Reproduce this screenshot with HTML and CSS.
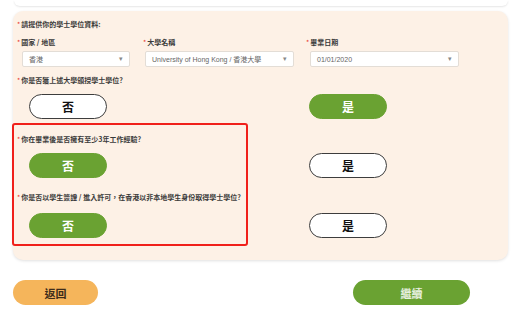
FILE: index.html
```html
<!DOCTYPE html>
<html lang="zh-Hant">
<head>
  <meta charset="UTF-8">
  <title>學士學位資料</title>
  <link rel="stylesheet" href="styles.css">
</head>
<body>

<div class="top-card"></div>

<section class="panel">
  <div class="intro"><span class="req">*</span>請提供你的學士學位資料:</div>

  <div class="fields">
    <div class="field f1">
      <div class="label"><span class="req">*</span>國家 / 地區</div>
      <div class="select">香港<span class="arrow">▾</span></div>
    </div>
    <div class="field f2">
      <div class="label"><span class="req">*</span>大學名稱</div>
      <div class="select">University of Hong Kong / 香港大學<span class="arrow">▾</span></div>
    </div>
    <div class="field f3">
      <div class="label"><span class="req">*</span>畢業日期</div>
      <div class="select">01/01/2020<span class="arrow">▾</span></div>
    </div>
  </div>

  <div class="question"><span class="req">*</span>你是否獲上述大學頒授學士學位?</div>
  <div class="choice-row">
    <button class="choice">否</button>
    <button class="choice on">是</button>
  </div>

  <!-- 需要核對的問題 -->
  <div class="alert-box">
    <div class="question"><span class="req">*</span>你在畢業後是否擁有至少3年工作經驗?</div>
    <div class="choice-row">
      <button class="choice on">否</button>
      <button class="choice">是</button>
    </div>
    <div class="question q3"><span class="req">*</span>你是否以學生簽證 / 進入許可，在香港以非本地學生身份取得學士學位?</div>
    <div class="choice-row r3">
      <button class="choice on">否</button>
      <button class="choice">是</button>
    </div>
  </div>
</section>

<div class="actions">
  <button class="btn back">返回</button>
  <button class="btn next">繼續</button>
</div>

</body>
</html>
```

FILE: styles.css
```css
html, body {
  margin: 0; padding: 0;
  background: #fff;
  color: #333;
  font-family: 'Noto Sans CJK TC', 'Noto Sans', sans-serif;
}

.top-card {
  height: 6px;
  margin: 0 15px 0 14px;
  background: #fff;
  border-radius: 0 0 6px 6px;
  box-shadow: 0 1px 2px rgba(0,0,0,0.10);
}

.panel {
  box-sizing: border-box;
  margin: 5px 0 0 13px;
  width: 495px;
  height: 249px;
  padding: 8px 0 0 4px;
  background: #fdf1e6;
  border-radius: 10px;
  box-shadow: 0 1px 3px rgba(0,0,0,0.12);
}

.req { color: #e8322c; font-weight: 400; margin-right: 1px; }

.intro, .label, .question {
  font-size: 7px;
  line-height: 10px;
  font-weight: 700;
  color: #3a3a3a;
  white-space: nowrap;
}

.fields {
  display: flex;
  margin-top: 8px;
}
.field.f1 { width: 126px; }
.field.f2 { width: 163px; }
.field.f1 .select { margin-left: 5px; width: 108px; }
.field.f2 .select { margin-left: 2px; width: 149px; }
.field.f3 .select { margin-left: 4px; width: 149px; }

.select {
  box-sizing: border-box;
  margin-top: 4px;
  height: 16px;
  background: #fff;
  border: 1px solid #e3ddd6;
  border-radius: 2px;
  padding: 0 6px 0 6px;
  display: flex;
  align-items: center;
  justify-content: space-between;
  font-family: 'Liberation Sans', 'Noto Sans CJK TC', sans-serif;
  font-size: 7px;
  color: #666;
  white-space: nowrap;
}
.arrow { color: #888; font-size: 7px; }

.question { margin-top: 8px; }

.choice-row {
  display: flex;
  gap: 202px;
  margin-top: 9px;
  padding-left: 12px;
}
.choice {
  box-sizing: border-box;
  width: 78px;
  height: 25px;
  border-radius: 13px;
  border: 1.5px solid #3d3d3d;
  background: #fff;
  color: #111;
  font-family: 'Noto Sans CJK TC', sans-serif;
  font-size: 12px;
  font-weight: 700;
  padding: 0;
  flex: none;
}
.choice.on {
  background: #6aa232;
  border-color: #6aa232;
  color: #fff;
}

.alert-box {
  box-sizing: border-box;
  width: 236px;
  height: 123px;
  margin: 4px 0 0 -5px;
  border: 2px solid #f0201b;
  border-radius: 3px;
  padding: 9px 0 0 3px;
}
.alert-box .question { margin-top: 0; }
.alert-box .question.q3 { margin-top: 14px; }
.alert-box .choice-row { padding-left: 12px; }
.alert-box .choice-row.r3 { margin-top: 11px; }

.actions {
  display: flex;
  margin: 20px 0 0 13px;
}
.btn {
  height: 25px;
  border: none;
  border-radius: 13px;
  font-family: 'Noto Sans CJK TC', sans-serif;
  font-size: 11px;
  font-weight: 700;
  padding: 0;
}
.btn.back {
  width: 85px;
  background: #f5b55b;
  color: #3e2c1a;
}
.btn.next {
  width: 117px;
  margin-left: 255px;
  background: #6aa232;
  color: #e8f0e0;
}
```
